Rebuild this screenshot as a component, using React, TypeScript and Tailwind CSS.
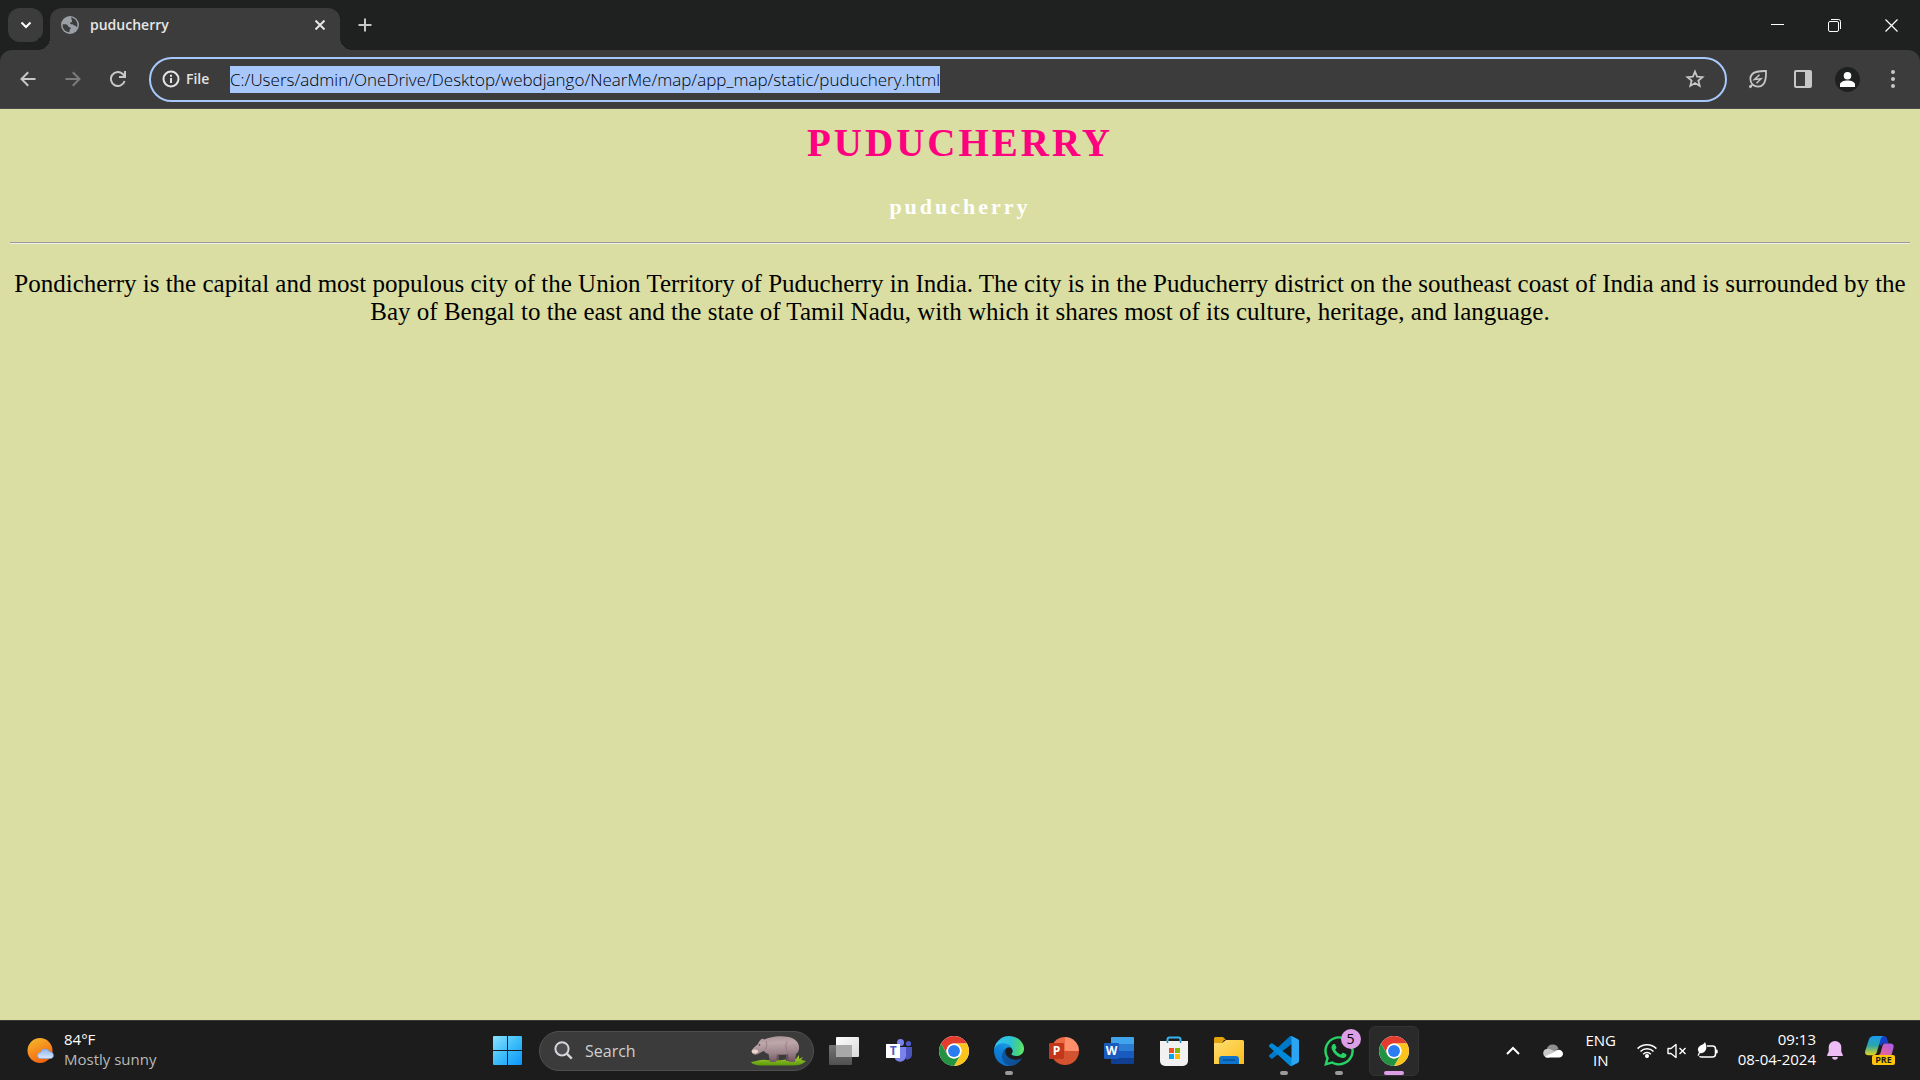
import type { ReactNode } from "react";
import { FaWhatsapp } from "react-icons/fa";

const PAGE_ADDRESS = "C:/Users/admin/OneDrive/Desktop/webdjango/NearMe/map/app_map/static/puduchery.html";

/* ---------- browser icons ---------- */

function GlobeIcon() {
  return (
    <svg viewBox="0 0 18 18" className="size-[18px]" aria-hidden="true">
      <circle cx="9" cy="9" r="9" fill="#9aa0a6" />
      <path d="M10.2 1.6C13.8 2.2 16.4 5.2 16.4 9c0 .9-.2 1.700-.4 2.400-.5-.9-1-1.500-2-1.600-1.300-.1-1.500-1.300-2.700-1.500-1.200-.1-2 .1-2.200-.9-.1-1 .9-1 1.700-1.500.7-.5.200-1.200 0-2-.2-.9-.8-1.200-.6-2.300z" fill="#3c3c3c" />
      <path d="M1.700 8.200c1.500.1 3.600-.1 4.700.7.9.7.4 1.600 1.300 2 1 .4 2 .2 2.100 1.200.1 1-.9 1-1.200 1.900-.2.700 0 1.400-.2 2.300C4.500 16 1.600 13 1.600 9z" fill="#3c3c3c" />
    </svg>
  );
}

function ArrowIcon({ flip = false }: { flip?: boolean }) {
  return (
    <svg viewBox="0 0 16 16" className={flip ? "size-4 rotate-180" : "size-4"} fill="none" stroke="currentColor" strokeWidth="2" aria-hidden="true">
      <path d="M15.500 8H2M8.200 1.200 1.500 8l6.700 6.800" />
    </svg>
  );
}

function ReloadIcon() {
  return (
    <svg viewBox="0 0 16 16" className="size-4" fill="none" stroke="currentColor" strokeWidth="2" aria-hidden="true">
      <path d="M14.600 10A7 7 0 1 1 13 3.200L15 5.400" />
      <path d="M15 0v6H9" />
    </svg>
  );
}

function InfoIcon() {
  return (
    <svg viewBox="0 0 18 18" className="size-[18px]" fill="none" stroke="currentColor" strokeWidth="2" aria-hidden="true">
      <circle cx="9" cy="9" r="7.500" />
      <path d="M9 8v5M9 4.800v2" />
    </svg>
  );
}

function StarIcon() {
  return (
    <svg viewBox="0 0 20 20" className="size-5" fill="none" stroke="currentColor" strokeWidth="1.800" aria-hidden="true">
      <path d="m10 2.600 2.100 5 5.400.5-4.100 3.500 1.300 5.300L10 14l-4.700 2.900 1.300-5.300L2.500 8.100l5.400-.5z" />
    </svg>
  );
}

function EnergyLeafIcon() {
  return (
    <svg viewBox="0 0 20 20" className="size-5" fill="none" stroke="currentColor" strokeWidth="1.800" aria-hidden="true">
      <path d="M1.500 18.500 4.500 15.500M4.500 15.500C1.500 12 1.800 7.500 4.300 5 7 2.300 11.500 1.900 18 2c.2 6.500-.3 11-3 13.700-2.500 2.500-7 2.800-10.500-.2zM1.500 16.500l2 2" />
      <path d="M11.500 5.800 6.500 10.500l6.500-.8-4.500 4.500" strokeWidth="1.500" />
    </svg>
  );
}

function SidePanelIcon() {
  return (
    <svg viewBox="0 0 18 18" className="size-[18px]" aria-hidden="true">
      <rect x="1" y="1" width="16" height="16" rx="1" fill="none" stroke="currentColor" strokeWidth="2" />
      <path d="M11 1h6v16h-6z" fill="currentColor" />
    </svg>
  );
}

/* ---------- taskbar icons ---------- */

function WeatherIcon() {
  return (
    <svg viewBox="0 0 28 26" className="h-[26px] w-7" aria-hidden="true">
      <defs>
        <linearGradient id="sun" x1="0" y1="0" x2=".5" y2="1">
          <stop offset="0" stopColor="#f5bd2f" />
          <stop offset="1" stopColor="#f5650f" />
        </linearGradient>
        <linearGradient id="cloud" x1="0" y1="0" x2="0" y2="1">
          <stop offset="0" stopColor="#8db4f1" />
          <stop offset="1" stopColor="#dbe7fb" />
        </linearGradient>
      </defs>
      <circle cx="13" cy="12.500" r="12.500" fill="url(#sun)" />
      <path d="M13.500 20.500a3 3 0 0 1 0-6 4.800 4.800 0 0 1 9-.8 3.500 3.500 0 0 1 1.500 6.800z" fill="url(#cloud)" stroke="#6f9de8" strokeWidth=".6" />
    </svg>
  );
}

function WindowsIcon() {
  return (
    <svg viewBox="0 0 29 29" className="size-[29px]" aria-hidden="true">
      <defs>
        <linearGradient id="win" x1="0" y1="0" x2="29" y2="29" gradientUnits="userSpaceOnUse">
          <stop offset="0" stopColor="#8be3ff" />
          <stop offset=".5" stopColor="#3dbdf9" />
          <stop offset="1" stopColor="#0a94fb" />
        </linearGradient>
      </defs>
      <path d="M1 0h13v14H0V1a1 1 0 0 1 1-1zM15 0h13a1 1 0 0 1 1 1v13H15zM0 15h14v14H1a1 1 0 0 1-1-1zM15 15h14v13a1 1 0 0 1-1 1H15z" fill="url(#win)" />
    </svg>
  );
}

function SearchIcon() {
  return (
    <svg viewBox="0 0 19 19" className="size-[19px]" fill="none" stroke="#d6d6dc" strokeWidth="2" aria-hidden="true">
      <circle cx="8" cy="7.800" r="6.600" fill="#4d4d4f" />
      <path d="m12.800 12.600 5 5" strokeWidth="2.400" />
    </svg>
  );
}

function HippoIcon() {
  return (
    <svg viewBox="0 0 56 30" className="h-[30px] w-14" aria-hidden="true">
      <defs>
        <linearGradient id="hippo" x1="0" y1="0" x2=".1" y2="1">
          <stop offset="0" stopColor="#a89094" />
          <stop offset=".3" stopColor="#bfa8ab" />
          <stop offset=".7" stopColor="#9c848b" />
          <stop offset="1" stopColor="#775c66" />
        </linearGradient>
        <linearGradient id="grass" x1="0" y1="0" x2="0" y2="1">
          <stop offset="0" stopColor="#b4d633" />
          <stop offset="1" stopColor="#5a9a0c" />
        </linearGradient>
      </defs>
      <path d="M1 26c5 0 9-3 15-2 10 1 20 0 27-2l3 1 3-4 0 4 4-2-2 3 5 1c-3 3-7 4.500-13 4.500H12C6 29.500 2 28 1 26z" fill="url(#grass)" />
      <path d="M36 17h5l-1 8h-4zM25 17h4v7h-4z" fill="#64505a" />
      <path d="M10.500 4c1-1.500 2.500-1.500 4-.5 2-1 4-1.500 6-2 6-1.500 13-1.500 18-.5 6 1 10 5 10.500 9.500.3 3-.5 5.500-3 7.500l-1 8h-6l-1-8c-4 1-7 1-11 .5L26 26h-6l-1.500-8c-2-.5-3.500-1.500-4.500-3-2 .5-4 2.500-7 3.500-3 .5-5-.5-5.500-3 .5-3 4-5 6.500-7.500.5-1.500 1.500-3 2.500-4z" fill="url(#hippo)" />
      <path d="M1.800 14.500c1.500-1.500 5-1.500 6.700.5-.5 2-2.500 3-4.500 2.500-1.500 0-2.700-1.500-2.200-3z" fill="#ecd5cc" />
      <path d="M16 5c1.500 3 .5 7-1 9M37 5c-2 4-1 9 1 12" fill="none" stroke="#8b7179" strokeWidth=".7" />
      <circle cx="9.500" cy="9" r=".8" fill="#33262b" />
    </svg>
  );
}

function TaskViewIcon() {
  return (
    <svg viewBox="0 0 30 28" className="h-7 w-[30px]" aria-hidden="true">
      <defs>
        <linearGradient id="tvFront" x1="0" y1="0" x2="1" y2="1">
          <stop offset="0" stopColor="#ffffff" />
          <stop offset="1" stopColor="#d8d8d8" />
        </linearGradient>
        <linearGradient id="tvBack" x1="0" y1="0" x2="0" y2="1">
          <stop offset="0" stopColor="#757575" />
          <stop offset="1" stopColor="#505050" />
        </linearGradient>
      </defs>
      <rect x="0" y="8" width="23" height="20" rx="1" fill="url(#tvBack)" />
      <rect x="7" y="0" width="23" height="20" rx="1" fill="url(#tvFront)" />
      <path d="M7 8h16v12H8a1 1 0 0 1-1-1z" fill="#a9a9a9" />
    </svg>
  );
}

function TeamsIcon() {
  return (
    <svg viewBox="0 0 26 24" className="h-6 w-[26px]" aria-hidden="true">
      <circle cx="22.500" cy="4.500" r="2.600" fill="#5059c9" />
      <path d="M18 8h8v8a5 5 0 0 1-6 4.500z" fill="#4b53bc" />
      <circle cx="14.500" cy="3.500" r="3.500" fill="#7b83eb" />
      <path d="M9 8h11v9a6 6 0 0 1-11 3z" fill="#7b83eb" />
      <path d="M0 5h14v14H0z" fill="#fff" />
      <text x="7.200" y="16" textAnchor="middle" fontSize="12" fontWeight="700" fontFamily="Open Sans, sans-serif" fill="#5059c9">T</text>
    </svg>
  );
}

function ChromeIcon() {
  return (
    <svg viewBox="0 0 48 48" className="size-[30px]" aria-hidden="true">
      <circle cx="24" cy="24" r="24" fill="#fff" />
      <path d="M3.220 12A24 24 0 0 1 44.780 12H24a12 12 0 0 0-10.400 18z" fill="#e33b2e" />
      <path d="M44.780 12A24 24 0 0 1 24 48l10.400-18A12 12 0 0 0 24 12z" fill="#fcc31c" />
      <path d="M24 48A24 24 0 0 1 3.220 12l10.380 18a12 12 0 0 0 20.800 0z" fill="#229342" />
      <circle cx="24" cy="24" r="12" fill="#fff" />
      <circle cx="24" cy="24" r="9.500" fill="#2a7cf0" />
    </svg>
  );
}

function EdgeIcon() {
  return (
    <svg viewBox="4.600 5 256 254" className="size-[30px]" aria-hidden="true">
      <defs>
        <linearGradient id="edgeA" x1="63" y1="178" x2="241" y2="178" gradientUnits="userSpaceOnUse">
          <stop offset="0" stopColor="#0c59a4" />
          <stop offset="1" stopColor="#114a8b" />
        </linearGradient>
        <linearGradient id="edgeB" x1="130" y1="60" x2="60" y2="250" gradientUnits="userSpaceOnUse">
          <stop offset="0" stopColor="#1b9de2" />
          <stop offset=".5" stopColor="#0d7fd8" />
          <stop offset="1" stopColor="#0b6fcd" />
        </linearGradient>
        <linearGradient id="edgeC" x1="20" y1="70" x2="260" y2="110" gradientUnits="userSpaceOnUse">
          <stop offset="0" stopColor="#35c1f1" />
          <stop offset=".5" stopColor="#2cc3d5" />
          <stop offset=".8" stopColor="#45d37f" />
          <stop offset="1" stopColor="#66eb6e" />
        </linearGradient>
      </defs>
      <path fill="url(#edgeA)" d="M235.680 195.460a93.730 93.730 0 0 1-10.540 4.710 101.870 101.870 0 0 1-35.900 6.460c-47.320 0-88.540-32.550-88.540-74.320A31.480 31.480 0 0 1 117.130 105.020c-42.800 1.800-53.800 46.400-53.800 72.530 0 73.880 68.090 81.370 82.760 81.370 7.910 0 19.840-2.300 27-4.560l1.310-.44a128.340 128.340 0 0 0 66.600-52.800 4 4 0 0 0-5.320-5.660z" />
      <path fill="url(#edgeB)" d="M110.340 246.340A79.200 79.200 0 0 1 87.600 225 80.720 80.720 0 0 1 117.130 105.020c3.120-1.470 8.450-4.130 15.540-4a32.350 32.350 0 0 1 25.690 13 31.880 31.880 0 0 1 6.360 18.660c0-.21 24.460-79.600-80-79.600-43.900 0-80 41.660-80 78.210a130.150 130.150 0 0 0 12.110 56 128 128 0 0 0 156.380 67.110 75.550 75.550 0 0 1-62.780-8z" />
      <path fill="url(#edgeC)" d="M156.940 153.780c-.81 1.050-3.300 2.500-3.300 5.660 0 2.610 1.700 5.120 4.720 7.230 14.380 10 41.490 8.680 41.560 8.680a59.560 59.560 0 0 0 30.270-8.350A61.380 61.380 0 0 0 260.620 114c.26-22.410-8-37.310-11.340-43.910C228.090 28.760 182.350 5 132.620 5a128 128 0 0 0-128 126.200c.48-36.540 36.800-66.050 80-66.050 3.500 0 23.460.34 42 10.070 16.340 8.580 24.900 18.940 30.850 29.210 6.180 10.670 7.280 24.150 7.280 29.520s-2.740 13.330-7.800 19.830z" />
    </svg>
  );
}

function PowerPointIcon() {
  return (
    <svg viewBox="0 0 30 28" className="h-7 w-[30px]" aria-hidden="true">
      <path d="M16 0v14H2A14 14 0 0 1 16 0z" fill="#ed6c47" />
      <path d="M16 0a14 14 0 0 1 14 14H16z" fill="#ff8f6b" />
      <path d="M2 14h28a14 14 0 0 1-28 0z" fill="#d35230" />
      <rect x="0" y="6" width="15" height="16" rx="1" fill="#c4371a" />
      <text x="7.500" y="18" textAnchor="middle" fontSize="12" fontWeight="700" fontFamily="Open Sans, sans-serif" fill="#fff">P</text>
    </svg>
  );
}

function WordIcon() {
  return (
    <svg viewBox="0 0 30 28" className="h-7 w-[30px]" aria-hidden="true">
      <path d="M8 0h21a1 1 0 0 1 1 1v6H7V1a1 1 0 0 1 1-1z" fill="#41a5ee" />
      <path d="M7 7h23v7H7z" fill="#2b7cd3" />
      <path d="M7 14h23v7H7z" fill="#185abd" />
      <path d="M7 21h23v5a1 1 0 0 1-1 1H8a1 1 0 0 1-1-1z" fill="#103f91" />
      <rect x="0" y="6" width="15" height="16" rx="1" fill="#185abd" />
      <text x="7.500" y="18" textAnchor="middle" fontSize="12" fontWeight="700" fontFamily="Open Sans, sans-serif" fill="#fff">W</text>
    </svg>
  );
}

function StoreIcon() {
  return (
    <svg viewBox="0 0 30 30" className="size-[30px]" aria-hidden="true">
      <path d="M8.500 7V3.500a2 2 0 0 1 2-2h9a2 2 0 0 1 2 2V7" fill="none" stroke="#35b4f0" strokeWidth="2" />
      <path d="M1 5h28v20a5 5 0 0 1-5 5H6a5 5 0 0 1-5-5z" fill="#f1f1f1" />
      <path d="M8.500 7V5M21.500 5v2" fill="none" stroke="#1785c8" strokeWidth="1.500" />
      <path d="M10 12h5v5h-5z" fill="#f25022" />
      <path d="M16 12h5v5h-5z" fill="#7fba00" />
      <path d="M10 18h5v5h-5z" fill="#00a4ef" />
      <path d="M16 18h5v5h-5z" fill="#ffb900" />
    </svg>
  );
}

function FolderIcon() {
  return (
    <svg viewBox="0 0 30 27" className="h-[27px] w-[30px]" aria-hidden="true">
      <defs>
        <linearGradient id="folder" x1="0" y1="0" x2="1" y2="1">
          <stop offset="0" stopColor="#ffdf73" />
          <stop offset="1" stopColor="#fbbc1a" />
        </linearGradient>
      </defs>
      <path d="M0 1.500A1.500 1.500 0 0 1 1.500 0H9l3 3h-2L8 6H0z" fill="#e2a30c" />
      <path d="M0 6h8l4-3h16.500A1.500 1.500 0 0 1 30 4.500V27H0z" fill="url(#folder)" />
      <path d="M5 27v-5a3 3 0 0 1 3-3h14a3 3 0 0 1 3 3v5z" fill="#0c74cc" />
      <path d="M9 23h12" stroke="#0a4f93" strokeWidth="1.500" />
    </svg>
  );
}

function VsCodeIcon() {
  return (
    <svg viewBox="0 0 100 100" className="size-[30px]" aria-hidden="true">
      <path fill="#0078c8" d="M96.460 10.800 75.860.88A6.230 6.230 0 0 0 68.750 2.080L1.300 63.580a4.170 4.170 0 0 0 0 6.170l5.510 5a4.170 4.170 0 0 0 5.320.24l81.230-61.620c2.730-2.070 6.640-.12 6.640 3.300v-.24c0-2.400-1.370-4.590-3.540-5.630z" />
      <path fill="#0089d8" d="m96.460 89.200-20.600 9.920a6.230 6.230 0 0 1-7.110-1.200L1.300 36.420a4.170 4.170 0 0 1 0-6.170l5.510-5a4.170 4.170 0 0 1 5.320-.24l81.230 61.620c2.730 2.070 6.640.12 6.640-3.300v.24c0 2.400-1.370 4.590-3.540 5.630z" />
      <path fill="#2ba5f2" d="M75.860 99.130a6.230 6.230 0 0 1-7.110-1.210c2.310 2.300 6.250.67 6.250-2.590V4.670c0-3.260-3.940-4.890-6.250-2.590A6.230 6.230 0 0 1 75.860.87l20.600 9.910c2.160 1.040 3.540 3.230 3.540 5.630v67.180c0 2.400-1.380 4.590-3.540 5.630z" />
    </svg>
  );
}

function ChevronUpIcon() {
  return (
    <svg viewBox="0 0 14 9" className="h-[9px] w-[14px]" fill="none" stroke="currentColor" strokeWidth="2" aria-hidden="true">
      <path d="m1 8 6-6 6 6" />
    </svg>
  );
}

function OneDriveIcon() {
  return (
    <svg viewBox="0 0 20 14" className="h-[14px] w-5" aria-hidden="true">
      <path d="M4.500 13.500A4.300 4.300 0 0 1 3.800 5 6.200 6.200 0 0 1 15.500 4.500l-5 4z" fill="#8f8f8f" />
      <path d="M3.800 5a5 5 0 0 1 4.500.8l7 3.500L6 13.500H4.500A4.300 4.300 0 0 1 3.800 5z" fill="#c9c9c9" />
      <path d="M2 12.500 11 8.200a5 5 0 0 1 4.600-2.500c2.500 0 4.400 1.700 4.400 4 0 2.200-1.800 3.900-4 3.900H4.500c-1 0-2-.4-2.500-1.100z" fill="#fff" />
    </svg>
  );
}

function WifiIcon() {
  return (
    <svg viewBox="0 0 20 15" className="h-[15px] w-5" fill="none" stroke="currentColor" strokeWidth="1.500" aria-hidden="true">
      <path d="M.6 5.600a13.200 13.200 0 0 1 18.800 0M3.500 8.500a9.200 9.200 0 0 1 13 0M6.200 11.200a5.300 5.300 0 0 1 7.600 0" />
      <circle cx="10" cy="13" r="1.300" fill="currentColor" />
    </svg>
  );
}

function MutedIcon() {
  return (
    <svg viewBox="0 0 20 16" className="h-4 w-5" fill="none" stroke="currentColor" strokeWidth="1.400" aria-hidden="true">
      <path d="M1 5.500h3L9 1.500v13L4 10.500H1z" strokeLinejoin="round" />
      <path d="m12.500 5 6 6M18.500 5l-6 6" />
    </svg>
  );
}

function BatteryIcon() {
  return (
    <svg viewBox="0 0 21 17" className="h-[17px] w-[21px]" aria-hidden="true">
      <path d="M10 4h5.500a3 3 0 0 1 3 3v5a3 3 0 0 1-3 3h-11a3 3 0 0 1-2-.8" fill="none" stroke="#fff" strokeWidth="1.500" />
      <path d="M19 7.500h.5a1.200 1.200 0 0 1 1.200 1.200v1.600a1.200 1.200 0 0 1-1.200 1.200H19z" fill="#fff" />
      <path d="M8 0c1.500 3 2 6 .5 8.500S4.500 11.500 3 11l-1.500 3-1-.6L2 10C0 8 1 5 3.500 3.500 5.500 2.500 7 2 8 0z" fill="#fff" />
    </svg>
  );
}

function BellIcon() {
  return (
    <svg viewBox="0 0 16 19" className="h-[19px] w-4" fill="#efbdf5" aria-hidden="true">
      <path d="M8 0a6.300 6.300 0 0 1 6.300 6.300v4.500l1.600 3.200c.2.600-.1 1-.7 1H.8c-.6 0-.9-.4-.7-1l1.600-3.200V6.300A6.300 6.300 0 0 1 8 0zM5.200 16h5.600a2.800 2.800 0 0 1-5.600 0z" />
    </svg>
  );
}

function CopilotIcon() {
  return (
    <svg viewBox="0 0 30 29" className="h-[29px] w-[30px]" aria-hidden="true">
      <defs>
        <linearGradient id="copA" x1="0" y1="0" x2="0" y2="1">
          <stop offset="0" stopColor="#1b9bf0" />
          <stop offset=".5" stopColor="#2aa6a8" />
          <stop offset="1" stopColor="#e5d51d" />
        </linearGradient>
        <linearGradient id="copB" x1="1" y1="0" x2="0" y2="1">
          <stop offset="0" stopColor="#a85bf0" />
          <stop offset="1" stopColor="#f2688a" />
        </linearGradient>
      </defs>
      <path d="M14 0h4c2.500 0 3.500 1 4.200 3l1.300 4.500H20c-2 0-3.500.5-4 2.500L14 8z" fill="#1740c8" />
      <path d="M9 0h9.500c-1.500.5-2.300 1.500-2.800 3l-4 13.500c-.7 2-2 2.700-4 2.700H3.500c-2.700 0-4-1.700-3.300-4.200l3.500-11C4.500 1.300 6.500 0 9 0z" fill="url(#copA)" />
      <path d="M20.500 7.500h4.500c3 0 4.300 1.500 3.500 4.200L26.500 19H13.500c1.500-.5 2-1.500 2.300-3l1.700-6c.6-1.800 1.500-2.500 3-2.500z" fill="url(#copB)" />
      <rect x="7" y="19" width="23" height="10" rx="2" fill="#ffc50a" />
      <text x="18.500" y="27" textAnchor="middle" fontSize="9" fontWeight="700" fontFamily="Open Sans, sans-serif" fill="#1c1c1c">PRE</text>
    </svg>
  );
}

/* ---------- building blocks ---------- */

function ToolButton({ label, muted = false, children }: { label: string; muted?: boolean; children: ReactNode }) {
  return (
    <button
      type="button"
      aria-label={label}
      className={muted ? "flex h-9 w-[45px] items-center justify-center text-[#7c7c7c]" : "flex h-9 w-[45px] items-center justify-center text-[#c7c7c7]"}
    >
      {children}
    </button>
  );
}

type TaskState = "idle" | "open" | "active";

function TaskButton({ label, state = "idle", badge, children }: { label: string; state?: TaskState; badge?: string; children: ReactNode }) {
  return (
    <button type="button" aria-label={label} className="flex h-[60px] w-[55px] items-center justify-center">
      <span
        className={
          state === "active"
            ? "relative flex size-[50px] items-center justify-center rounded-md border border-[#333333] bg-[#2a2a2a]"
            : "relative flex size-[50px] items-center justify-center"
        }
      >
        {children}
        {badge && (
          <span className="absolute top-[3px] right-[3px] flex size-5 items-center justify-center rounded-full bg-[#dc9fe6] text-sm leading-none text-black">
            {badge}
          </span>
        )}
        {state === "open" && <span className="absolute bottom-px h-1 w-2 rounded-full bg-[#9a9a9a]" />}
        {state === "active" && <span className="absolute bottom-0 h-1 w-5 rounded-full bg-[#dc9fe6]" />}
      </span>
    </button>
  );
}

function TabStrip() {
  return (
    <header className="flex h-[50px] bg-[#1f2120] pl-2">
      <button type="button" aria-label="Search tabs" className="mt-2 flex h-[34px] w-[35px] items-center justify-center rounded-xl bg-[#3c3c3c] text-white">
        <svg viewBox="0 0 12 8" className="h-2 w-3" fill="none" stroke="currentColor" strokeWidth="2" aria-hidden="true">
          <path d="m1.500 1.500 4.500 4.500 4.500-4.500" />
        </svg>
      </button>
      <div className="relative mt-2 ml-[7px] flex w-[290px] items-center rounded-t-xl bg-[#3c3c3c] pr-3 pb-2 pl-[11px] text-[#e6e6e6]">
        <span className="absolute bottom-0 -left-3 size-3 bg-[radial-gradient(circle_at_0_0,#1f2120_12px,#3c3c3c_12px)]" />
        <span className="absolute -right-3 bottom-0 size-3 bg-[radial-gradient(circle_at_100%_0,#1f2120_12px,#3c3c3c_12px)]" />
        <GlobeIcon />
        <span className="ml-[11px] flex-1 text-sm font-semibold">puducherry</span>
        <button type="button" aria-label="Close tab" className="flex size-4 items-center justify-center">
          <svg viewBox="0 0 10 10" className="size-[10px]" stroke="currentColor" strokeWidth="2" aria-hidden="true">
            <path d="m.5.5 9 9M9.500.5l-9 9" />
          </svg>
        </button>
      </div>
      <button type="button" aria-label="New tab" className="ml-[9px] flex w-[31px] items-center justify-center text-[#c7c7c7]">
        <svg viewBox="0 0 14 14" className="size-[14px]" stroke="currentColor" strokeWidth="2" aria-hidden="true">
          <path d="M7 .5v13M.5 7h13" />
        </svg>
      </button>
      <div className="ml-auto flex text-white">
        <button type="button" aria-label="Minimise" className="flex w-[57px] items-center justify-center">
          <svg viewBox="0 0 13 13" className="size-[13px]" stroke="currentColor" aria-hidden="true">
            <path d="M0 5.500h13" />
          </svg>
        </button>
        <button type="button" aria-label="Restore" className="flex w-[57px] items-center justify-center">
          <svg viewBox="0 0 13 13" className="size-[13px]" fill="none" stroke="currentColor" aria-hidden="true">
            <path d="M3 .5h7.500a2 2 0 0 1 2 2V10" />
            <rect x=".5" y="2.500" width="10" height="10" rx="1.500" />
          </svg>
        </button>
        <button type="button" aria-label="Close" className="flex w-[57px] items-center justify-center">
          <svg viewBox="0 0 13 13" className="size-[13px]" stroke="currentColor" strokeWidth="1.200" aria-hidden="true">
            <path d="m.5.5 12 12M12.500.5l-12 12" />
          </svg>
        </button>
      </div>
    </header>
  );
}

function Toolbar() {
  return (
    <div className="bg-[#1f2120]">
      <div className="flex h-[59px] items-center rounded-t-xl border-b border-[#4d4d4d] bg-[#3c3c3c] px-[5px]">
        <ToolButton label="Back"><ArrowIcon /></ToolButton>
        <ToolButton label="Forward" muted><ArrowIcon flip /></ToolButton>
        <ToolButton label="Reload"><ReloadIcon /></ToolButton>
        <div className="mr-2 ml-[9px] flex h-[45px] flex-1 items-center rounded-full border-2 border-[#a8c7fa] pr-[20px] pl-[11px] text-[#e3e3e3]">
          <InfoIcon />
          <label htmlFor="address" className="ml-[6px] w-6 text-sm font-semibold">File</label>
          <input
            id="address"
            type="text"
            readOnly
            value={PAGE_ADDRESS}
            className="ml-5 h-[27px] max-w-full bg-[#a8c7fa] text-[17px] font-[350] text-black outline-none [field-sizing:content]"
          />
          <button type="button" aria-label="Bookmark this page" className="ml-auto text-[#c7c7c7]">
            <StarIcon />
          </button>
        </div>
        <ToolButton label="Energy saver"><EnergyLeafIcon /></ToolButton>
        <ToolButton label="Side panel"><SidePanelIcon /></ToolButton>
        <ToolButton label="Profile">
          <svg viewBox="0 0 25 25" className="size-[25px]" aria-hidden="true">
            <circle cx="12.500" cy="12.500" r="12.500" fill="#1f2120" />
            <circle cx="12.500" cy="8.700" r="3.800" fill="#fff" />
            <path d="M5 20v-2.500c0-2.500 4-4 7.500-4s7.500 1.500 7.500 4V20z" fill="#fff" />
          </svg>
        </ToolButton>
        <ToolButton label="Menu">
          <svg viewBox="0 0 4 18" className="h-[18px] w-1" fill="currentColor" aria-hidden="true">
            <circle cx="2" cy="2" r="2" />
            <circle cx="2" cy="9" r="2" />
            <circle cx="2" cy="16" r="2" />
          </svg>
        </ToolButton>
      </div>
    </div>
  );
}

function Article() {
  return (
    <main className="flex-1 bg-[#dadea2] px-[10px] pt-[11px] text-center font-['Liberation_Serif',serif]">
      <h1 className="text-[39px] leading-[46px] font-bold tracking-[3px] text-[#ff0080]">PUDUCHERRY</h1>
      <h3 className="mt-7 text-[22px] leading-[26px] font-bold tracking-[3px] text-white">puducherry</h3>
      <hr className="mt-[22px] h-[2px] border-t border-b border-t-[#9a9a9a] border-b-[#eeeeee]" />
      <p className="mt-[26px] text-[25px] leading-7 text-black">
        Pondicherry is the capital and most populous city of the Union Territory of Puducherry in India. The city is in the Puducherry
        district on the southeast coast of India and is surrounded by the Bay of Bengal to the east and the state of Tamil Nadu, with
        which it shares most of its culture, heritage, and language.
      </p>
    </main>
  );
}

function Taskbar() {
  return (
    <footer className="flex h-[60px] border-t border-[#3a3a35] bg-[#1c1c1c] text-[15px] leading-5 text-white">
      <div className="flex flex-1 items-center pl-[27px]">
        <button type="button" className="flex items-center gap-[9px] text-left">
          <WeatherIcon />
          <span className="flex flex-col pb-1">
            <span>84°F</span>
            <span className="text-[#b9b9b9]">Mostly sunny</span>
          </span>
        </button>
      </div>
      <nav aria-label="Taskbar" className="mr-[21px] flex items-center">
        <TaskButton label="Start"><WindowsIcon /></TaskButton>
        <div className="mr-[2px] ml-1 flex h-10 w-[275px] items-center rounded-full border border-[#505050] bg-[#3b3b3b] pr-[7px] pl-[14px]">
          <SearchIcon />
          <input
            type="search"
            aria-label="Search"
            placeholder="Search"
            className="ml-3 min-w-0 flex-1 bg-transparent text-base text-[#cfcfcf] outline-none placeholder:text-[#cfcfcf]"
          />
          <HippoIcon />
        </div>
        <TaskButton label="Task view"><TaskViewIcon /></TaskButton>
        <TaskButton label="Microsoft Teams"><TeamsIcon /></TaskButton>
        <TaskButton label="Google Chrome"><ChromeIcon /></TaskButton>
        <TaskButton label="Microsoft Edge" state="open"><EdgeIcon /></TaskButton>
        <TaskButton label="PowerPoint"><PowerPointIcon /></TaskButton>
        <TaskButton label="Word"><WordIcon /></TaskButton>
        <TaskButton label="Microsoft Store"><StoreIcon /></TaskButton>
        <TaskButton label="File Explorer"><FolderIcon /></TaskButton>
        <TaskButton label="Visual Studio Code" state="open"><VsCodeIcon /></TaskButton>
        <TaskButton label="WhatsApp" state="open" badge="5"><FaWhatsapp className="size-[34px] text-[#25d366]" /></TaskButton>
        <TaskButton label="Google Chrome, puducherry" state="active"><ChromeIcon /></TaskButton>
      </nav>
      <div className="flex flex-1 items-center justify-end pr-[25px]">
        <button type="button" aria-label="Show hidden icons" className="flex w-10 justify-center"><ChevronUpIcon /></button>
        <button type="button" aria-label="OneDrive" className="flex w-10 justify-center"><OneDriveIcon /></button>
        <button type="button" className="flex w-14 flex-col items-center pb-[2px]">
          <span>ENG</span>
          <span>IN</span>
        </button>
        <button type="button" aria-label="Network, volume and battery" className="ml-2 flex items-center gap-[10px]">
          <WifiIcon />
          <MutedIcon />
          <BatteryIcon />
        </button>
        <button type="button" className="ml-5 flex flex-col items-end pb-1">
          <span>09:13</span>
          <span>08-04-2024</span>
        </button>
        <button type="button" aria-label="Notifications" className="ml-[11px]"><BellIcon /></button>
        <button type="button" aria-label="Copilot preview" className="ml-[22px]"><CopilotIcon /></button>
      </div>
    </footer>
  );
}

export default function App() {
  return (
    <div className="flex min-h-screen flex-col font-['Open_Sans',sans-serif]">
      <TabStrip />
      <Toolbar />
      <Article />
      <Taskbar />
    </div>
  );
}
